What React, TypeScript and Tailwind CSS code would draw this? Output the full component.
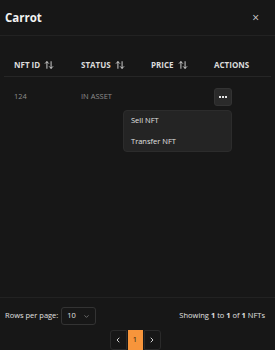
import React from 'react'

function SortIcon() {
  return (
    <svg width="10" height="10" viewBox="0 0 24 24" fill="none" stroke="currentColor" strokeWidth="2.2" strokeLinecap="round" strokeLinejoin="round" className="ml-[4px]">
      <path d="m3 8 4-4 4 4" />
      <path d="M7 4v16" />
      <path d="m21 16-4 4-4-4" />
      <path d="M17 20V4" />
    </svg>
  )
}

function App() {
  return (
    <div
      className="w-[275px] h-[350px] bg-[#171717] text-[#e5e5e5] flex flex-col overflow-hidden"
      style={{ fontFamily: '"Open Sans", "Noto Sans", sans-serif' }}
    >
      <div className="h-[36px] shrink-0 flex items-center justify-between px-[5px] border-b border-[#222]">
        <span className="text-[11.5px] font-bold text-[#f2f2f2]">Carrot</span>
        <span className="text-[12px] text-[#cfcfcf] mr-[11px]">×</span>
      </div>

      <div className="flex-1 mx-[4px] mt-[18px]">
        <div className="flex h-[23px] items-center border-b border-[#262626] text-[8px] font-bold text-[#dcdcdc]">
          <div className="w-[67px] pl-[10px] flex items-center">NFT ID <SortIcon /></div>
          <div className="w-[70px] pl-[10px] flex items-center">STATUS <SortIcon /></div>
          <div className="w-[63px] pl-[10px] flex items-center">PRICE <SortIcon /></div>
          <div className="flex-1 pl-[10px]">ACTIONS</div>
        </div>
        <div className="flex h-[40px] items-center text-[7.5px] text-[#8c8c8c]">
          <div className="w-[67px] pl-[10px]">124</div>
          <div className="w-[70px] pl-[10px]">IN ASSET</div>
          <div className="w-[63px] pl-[10px]"></div>
          <div className="flex-1 pl-[10px]">
            <div className="relative w-[18px]">
              <button className="w-[18px] h-[18px] rounded-[3px] bg-[#2a2a2a] border border-[#333] flex items-center justify-center gap-[1px]">
                <span className="w-[2px] h-[2px] bg-[#e5e5e5]" />
                <span className="w-[2px] h-[2px] bg-[#e5e5e5]" />
                <span className="w-[2px] h-[2px] bg-[#e5e5e5]" />
              </button>
              <div className="absolute right-0 top-full mt-[4px] w-[109px] h-[42px] rounded-[4px] bg-[#242424] border border-[#2c2c2c] flex flex-col justify-center gap-[9px] pl-[7px] text-[7.5px] font-medium text-[#e0e0e0]">
                <span>Sell NFT</span>
                <span>Transfer NFT</span>
              </div>
            </div>
          </div>
        </div>
      </div>

      <div className="shrink-0 border-t border-[#222] pt-[9px] pl-[5px] pr-[10px]">
        <div className="flex items-center justify-between h-[18px]">
          <div className="flex items-center text-[7.5px] text-[#e0e0e0]">
            <span>Rows per page:</span>
            <div className="ml-[3px] w-[35px] h-[18px] rounded-[3px] border border-[#333] flex items-center justify-between px-[5px]">
              <span>10</span>
              <svg width="7" height="7" viewBox="0 0 24 24" fill="none" stroke="#888" strokeWidth="2.5" strokeLinecap="round" strokeLinejoin="round">
                <path d="m6 9 6 6 6-6" />
              </svg>
            </div>
          </div>
          <span className="text-[7.5px] text-[#e0e0e0]">
            Showing <b>1</b> to <b>1</b> of <b>1</b> NFTs
          </span>
        </div>
        <div className="flex justify-center mt-[5px]">
          <div className="flex h-[20px] gap-[1px]">
            <button className="w-[17px] rounded-l-[3px] border border-[#2a2a2a] flex items-center justify-center text-[#cfcfcf]">
              <svg width="8" height="8" viewBox="0 0 24 24" fill="none" stroke="currentColor" strokeWidth="3" strokeLinecap="round" strokeLinejoin="round">
                <path d="m15 18-6-6 6-6" />
              </svg>
            </button>
            <button className="w-[15px] bg-[#f7953b] text-[7.5px] text-[#2a1a0a] flex items-center justify-center">1</button>
            <button className="w-[17px] rounded-r-[3px] border border-[#2a2a2a] flex items-center justify-center text-[#cfcfcf]">
              <svg width="8" height="8" viewBox="0 0 24 24" fill="none" stroke="currentColor" strokeWidth="3" strokeLinecap="round" strokeLinejoin="round">
                <path d="m9 18 6-6-6-6" />
              </svg>
            </button>
          </div>
        </div>
      </div>
    </div>
  )
}

export default App
